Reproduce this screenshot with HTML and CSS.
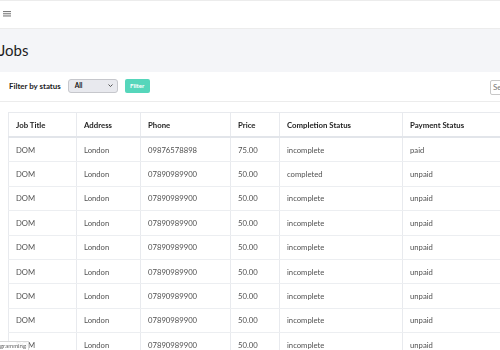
FILE: index.html
```html
<!DOCTYPE html>
<html lang="en">
<head>
<meta charset="utf-8">
<title>Jobs</title>
<link rel="stylesheet" href="styles.css">
</head>
<body>
<div class="page">
  <nav class="topbar">
    <svg class="burger" width="8" height="6" viewBox="0 0 8 6" aria-hidden="true">
      <rect x="0" y="0" width="8" height="1.1" fill="#7a7a7a"/>
      <rect x="0" y="2.2" width="8" height="1.1" fill="#7a7a7a"/>
      <rect x="0" y="4.4" width="8" height="1.1" fill="#7a7a7a"/>
    </svg>
  </nav>
  <header class="title-band">
    <h1 class="title">Jobs</h1>
  </header>
  <div class="filter-bar">
    <form class="filter">
      <label class="filter-label">Filter by status</label>
      <div class="select">
        <span class="select-value">All</span>
        <svg class="chev" width="5" height="3" viewBox="0 0 5 3" aria-hidden="true"><path d="M0.5 0.5 L2.5 2.5 L4.5 0.5" fill="none" stroke="#444" stroke-width="0.9"/></svg>
      </div>
      <button type="button" class="btn">Filter</button>
    </form>
    <div class="search">Se</div>
  </div>
  <main class="content">
    <table class="jobs">
      <thead>
        <tr>
          <th class="c1">Job Title</th>
          <th class="c2">Address</th>
          <th class="c3">Phone</th>
          <th class="c4">Price</th>
          <th class="c5">Completion Status</th>
          <th class="c6">Payment Status</th>
        </tr>
      </thead>
      <tbody>
        <tr><td>DOM</td><td>London</td><td>09876578898</td><td>75.00</td><td>incomplete</td><td>paid</td></tr>
        <tr><td>DOM</td><td>London</td><td>07890989900</td><td>50.00</td><td>completed</td><td>unpaid</td></tr>
        <tr><td>DOM</td><td>London</td><td>07890989900</td><td>50.00</td><td>incomplete</td><td>unpaid</td></tr>
        <tr><td>DOM</td><td>London</td><td>07890989900</td><td>50.00</td><td>incomplete</td><td>unpaid</td></tr>
        <tr><td>DOM</td><td>London</td><td>07890989900</td><td>50.00</td><td>incomplete</td><td>unpaid</td></tr>
        <tr><td>DOM</td><td>London</td><td>07890989900</td><td>50.00</td><td>incomplete</td><td>unpaid</td></tr>
        <tr><td>DOM</td><td>London</td><td>07890989900</td><td>50.00</td><td>incomplete</td><td>unpaid</td></tr>
        <tr><td>DOM</td><td>London</td><td>07890989900</td><td>50.00</td><td>incomplete</td><td>unpaid</td></tr>
        <tr><td>DOM</td><td>London</td><td>07890989900</td><td>50.00</td><td>incomplete</td><td>unpaid</td></tr>
      </tbody>
    </table>
  </main>
  <span class="status-tip">gramming</span>
</div>
</body>
</html>
```
FILE: styles.css
```css
html, body {
  margin: 0;
  padding: 0;
  background: #ffffff;
  overflow: hidden;
}
body {
  font-family: Lato, "Open Sans", "DejaVu Sans", sans-serif;
  color: #222;
}
.page {
  position: relative;
  width: 580px;
  height: 350px;
  overflow: hidden;
}
.topbar {
  height: 27px;
  border-top: 1px solid #ececec;
  border-bottom: 1px solid #ececec;
  display: flex;
  align-items: center;
  padding-left: 3px;
  box-sizing: content-box;
}
.burger {
  display: block;
  margin-top: -1px;
}
.title-band {
  height: 43px;
  background: #f4f5f8;
  display: flex;
  align-items: center;
  padding-bottom: 2px;
  box-sizing: border-box;
}
.title {
  margin: 0 0 0 -1px;
  font-size: 15px;
  font-weight: 400;
  color: #1e1e1e;
}
.filter-bar {
  height: 29px;
  border-bottom: 1px solid #ececec;
  display: flex;
  align-items: center;
  justify-content: space-between;
  padding: 0 9px;
  box-sizing: content-box;
}
.filter {
  display: flex;
  align-items: center;
  margin-top: -2px;
}
.filter-label {
  font-size: 7.9px;
  font-weight: 700;
  color: #222;
  margin-right: 7px;
}
.select {
  width: 50px;
  height: 14px;
  box-sizing: border-box;
  background: #e8e9ee;
  border: 1px solid #c6c7cc;
  border-radius: 3px;
  display: flex;
  align-items: center;
  justify-content: space-between;
  padding: 0 4px 0 6px;
}
.select-value {
  font-size: 6.5px;
  font-weight: 700;
  color: #111;
}
.chev {
  display: block;
}
.btn {
  margin-left: 7px;
  width: 25px;
  height: 14px;
  border: none;
  border-radius: 2px;
  background: #56d6bb;
  color: #ffffff;
  font-family: inherit;
  font-size: 6.2px;
  font-weight: 700;
  padding: 0;
}
.search {
  width: 81px;
  height: 15px;
  box-sizing: border-box;
  border: 1px solid #c8c8c8;
  border-radius: 2px;
  font-size: 8px;
  color: #777;
  display: flex;
  align-items: center;
  padding-left: 2px;
  margin-top: 1px;
}
.content {
  padding: 10px 0 0 8px;
}
.jobs {
  border-collapse: collapse;
  border: 1px solid #e8eaee;
  table-layout: fixed;
  width: 540px;
  will-change: transform;
}
.jobs th, .jobs td {
  text-align: left;
  padding: 0 7px;
  border-left: 1px solid #e8eaee;
  white-space: nowrap;
}
.jobs th {
  height: 23px;
  font-size: 7.8px;
  font-weight: 700;
  color: #1e1e1e;
  border-bottom: 2px solid #e2e5ea;
}
.jobs td {
  height: 23.4px;
  font-size: 7.7px;
  color: #525252;
  border-bottom: 1px solid #eceef1;
}
.c1 { width: 53px; }
.c2 { width: 49px; }
.c3 { width: 75px; }
.c4 { width: 34px; }
.c5 { width: 108px; }
.c6 { width: 150px; }
.status-tip {
  position: absolute;
  left: 0;
  bottom: 0;
  height: 8px;
  padding: 0 2px 0 0;
  background: rgba(255, 255, 255, 0.9);
  border-top: 1px solid #d8d8d8;
  border-right: 1px solid #d8d8d8;
  font-size: 6px;
  line-height: 8px;
  color: #666;
}
```
